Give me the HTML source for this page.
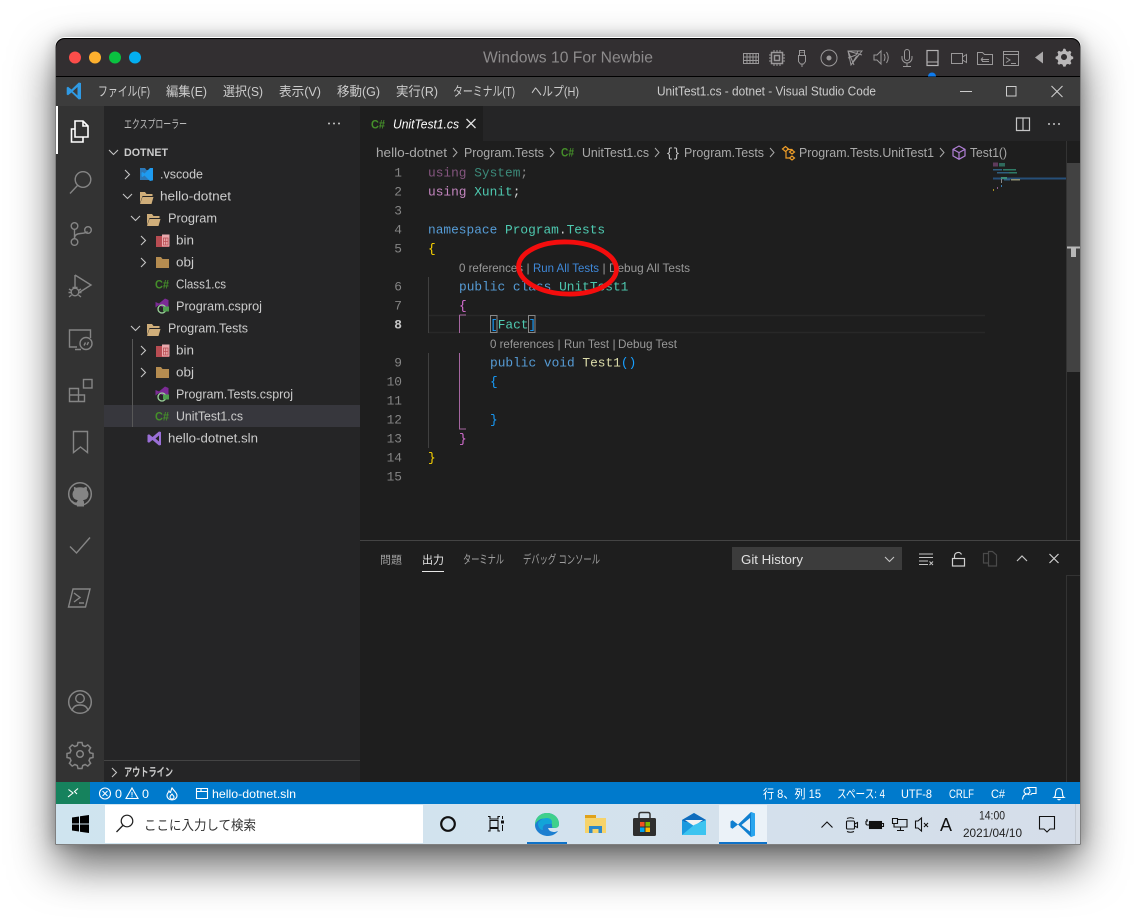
<!DOCTYPE html>
<html lang="ja"><head><meta charset="utf-8"><title>Windows 10 For Newbie</title>
<style>
html,body{margin:0;padding:0;background:#fff;width:1136px;height:918px;overflow:hidden}
#w{position:absolute;left:55px;top:37px;width:1026px;height:808px;border-radius:10px 10px 2px 2px;box-shadow:0 20px 44px rgba(0,0,0,.62),0 0 14px rgba(0,0,0,.22)}
svg{position:absolute;left:0;top:0}
text{font-family:"Liberation Sans","Noto Sans CJK JP",sans-serif;font-size:12.5px;fill:#ccc;white-space:pre}
.t{font-size:13px;fill:#ccc}
.m{font-size:13px;fill:#ccc}
.c{font-family:"Liberation Mono",monospace;font-size:12.83px}
.n{font-family:"Liberation Mono",monospace;font-size:12.83px;fill:#858585;text-anchor:end}
.l{font-size:12px;fill:#999}
.b{font-size:12.5px;fill:#a9a9a9}
.s{font-size:12px;fill:#fff}
.cs{font-family:"Liberation Sans",sans-serif;font-size:11.5px;font-weight:bold;fill:#458f2a}
.i{fill:none;stroke:#858585;stroke-width:1.4}
.d{fill:none;stroke:#d0d0d0;stroke-width:1.2}
.tb{fill:none;stroke:#9a9899;stroke-width:1}
</style></head><body>
<div id="w"></div>
<svg width="1136" height="918" viewBox="0 0 1136 918" xmlns="http://www.w3.org/2000/svg">
<!-- window frame -->
<path d="M55.5 47a9 9 0 0 1 9-9H1071.500a9 9 0 0 1 9 9V844.500H55.500Z" fill="#000"/>
<path d="M56 48a9 9 0 0 1 9-9H1071a9 9 0 0 1 9 9V76H56Z" fill="#322f31"/>
<rect x="56" y="77" width="1024" height="29" fill="#3c3c3c"/>
<rect x="56" y="106" width="48" height="676" fill="#333"/>
<rect x="104" y="106" width="256" height="676" fill="#252526"/>
<rect x="360" y="106" width="720" height="676" fill="#1e1e1e"/>
<rect x="360" y="106" width="720" height="35" fill="#252526"/>
<rect x="360" y="106" width="123" height="35" fill="#1e1e1e"/>
<rect x="56" y="782" width="1024" height="22" fill="#007acc"/>
<rect x="56" y="782" width="34" height="22" fill="#16825d"/>
<defs><linearGradient id="tbg" x1="0" x2="1" y1="0" y2="0"><stop offset="0" stop-color="#cfe4ef"/><stop offset=".45" stop-color="#d3e3ee"/><stop offset="1" stop-color="#d5dde9"/></linearGradient></defs>
<rect x="56" y="804" width="1024" height="40" fill="url(#tbg)"/>

<!-- mac title bar -->
<circle cx="75" cy="57.500" r="6" fill="#fc4d4a"/><circle cx="95" cy="57.500" r="6" fill="#fdb02e"/><circle cx="115" cy="57.500" r="6" fill="#0ac240"/><circle cx="135" cy="57.500" r="6" fill="#03aef0"/>
<text x="483" y="62.500" textLength="170" lengthAdjust="spacingAndGlyphs" style="font-size:16px;fill:#8d8b8c">Windows 10 For Newbie</text>
<g class="tb">
<path d="M743.500 53.500h15v10h-15zM743.500 57h15M743.500 60.500h15M747 53.500v10M750 53.500v10M753 53.500v10M756 53.500v10"/>
<path d="M771.500 52.500h11v11h-11zM774.500 55.500h5v5h-5z" stroke-width="1.500"/><path d="M769 55h2.500M769 58h2.500M769 61h2.500M782.500 55h2.500M782.500 58h2.500M782.500 61h2.500M774 50v2.500M777 50v2.500M780 50v2.500M774 63.500v2.500M777 63.500v2.500M780 63.500v2.500"/>
<path d="M799.500 50.500h5v5h-5zM798.500 55.500h7v6l-2 2.500h-3l-2-2.500zM802 64v3M801 52v1M803 52v1"/>
<circle cx="829" cy="58" r="8"/><circle cx="829" cy="58" r="2" fill="#9a9899"/>
<path d="M848 51h14l-11 14zM848 51l6 14M848 51l14 4M848 58l8-3 2-4M851 65l5-8 3-2"/>
<path d="M874 55h3l4-4v13l-4-4h-3zM884 54q2 3.500 0 7M886.500 52q3.500 5.500 0 11"/>
<rect x="904.500" y="49.500" width="5" height="11" rx="2.500"/><path d="M902 56v2a5 5 0 0 0 10 0v-2M907 63v3M903 66.500h8"/>
<rect x="927" y="50.500" width="11" height="15" fill="none" stroke="#b5b3b4" stroke-width="1.200"/><path d="M927 62h11" stroke="#b5b3b4"/>
<path d="M951.500 53.500h11v10h-11zM962.500 57l4-2.500v8l-4-2.500z"/>
<path d="M977.500 54.500v10h15v-10h-8l-2-2h-5zM981 59.500h8M981 59.500l2-2M981 59.500l2 2M989 61.500h-7"/>
<path d="M1003.500 51.500h15v14h-15zM1003.500 54.500h15M1006 57.500l4 2.500-4 2.500M1011 63.500h5"/>
</g>
<path d="M1043 51.500v12l-8-6z" fill="#aaa8a9"/>
<path d="M1064 49.500l1.500.5.700 2 1.700.700 2-.9 1.500 1.500-.9 2 .700 1.700 2 .7v2.200l-2 .7-.7 1.700.9 2-1.500 1.500-2-.9-1.700.7-.7 2h-2.200l-.7-2-1.700-.7-2 .9-1.500-1.500.9-2-.7-1.700-2-.7v-2.200l2-.7.7-1.700-.9-2 1.500-1.500 2 .9 1.700-.7.7-2zM1064 55a3 3 0 1 0 .01 0Z" transform="translate(0 -1)" fill="#b9b7b8" fill-rule="evenodd"/>
<path d="M928 76.500a4 4 0 0 1 8 0Z" fill="#0f7cf0"/>

<!-- menu bar -->
<path d="M78 83.500L75.800 83 68.500 90 65 87.200 63.700 88v7l1.300.8 3.500-2.800 7.300 7 2.200-.5ZM74.500 87.500V96L69.800 91.800Z" fill="#2f9ae4" fill-rule="evenodd" transform="translate(3 -.5)"/>
<text class="m" x="98" y="96" textLength="52" lengthAdjust="spacingAndGlyphs">ファイル(F)</text>
<text class="m" x="166" y="96" textLength="41" lengthAdjust="spacingAndGlyphs">編集(E)</text>
<text class="m" x="223" y="96" textLength="40" lengthAdjust="spacingAndGlyphs">選択(S)</text>
<text class="m" x="279" y="96" textLength="42" lengthAdjust="spacingAndGlyphs">表示(V)</text>
<text class="m" x="337" y="96" textLength="43" lengthAdjust="spacingAndGlyphs">移動(G)</text>
<text class="m" x="396" y="96" textLength="42" lengthAdjust="spacingAndGlyphs">実行(R)</text>
<text class="m" x="453" y="96" textLength="62" lengthAdjust="spacingAndGlyphs">ターミナル(T)</text>
<text class="m" x="531" y="96" textLength="48" lengthAdjust="spacingAndGlyphs">ヘルプ(H)</text>
<text x="657" y="95.500" textLength="219" lengthAdjust="spacingAndGlyphs" style="font-size:12.500px">UnitTest1.cs - dotnet - Visual Studio Code</text>
<path d="M960 91.500h12" stroke="#ccc" fill="none"/><rect x="1006.500" y="86.500" width="9.500" height="9.500" fill="none" stroke="#ccc"/><path d="M1051.500 86l11 11M1062.500 86l-11 11" stroke="#ccc" stroke-width="1.100" fill="none"/>

<!-- activity bar -->
<rect x="56" y="106" width="2" height="48" fill="#fff"/>
<path d="M75 129h-3.500v13h11.500v-5M75 121h8l5 5v11H75ZM83 121v5h5" fill="none" stroke="#fff" stroke-width="1.600"/>
<g class="i">
<circle cx="83" cy="179.500" r="7.800"/><path d="M77.500 185.500L70 193.500"/>
<circle cx="74.500" cy="226" r="3.300"/><circle cx="74.500" cy="242" r="3.300"/><circle cx="88" cy="230" r="3.300"/><path d="M74.500 229.500v9M74.500 238q0-4 6-4.500 6-.5 7-2"/>
<path d="M75 275v12M75 275l16 10-11 7"/><circle cx="75" cy="292" r="3.800"/><path d="M69 289l2.500 1.500M81 289l-2.500 1.500M68.500 292.500h2.500M81.500 292.500h-2.500M69 297l2.500-2M81 297l-2.500-2M72.500 287.500h5"/>
<path d="M77 347H69.500v-17h21v8M75 349.500h6"/><circle cx="86" cy="343.500" r="6"/><path d="M84 345.500l1.500-3M87 345l1.500-3"/>
<path d="M69.500 388.500h9v13h-9zM69.500 395h15v6.500h-6.200M78.500 388.500v6.500"/><rect x="83.500" y="379.500" width="8.500" height="8.500"/>
<path d="M73.500 431.500h14v21l-7-5.500-7 5.500z"/>
<circle cx="80" cy="494" r="11.300" stroke-width="1.500"/>
<path d="M70 546.500l6.500 6.500L90 537.500"/>
<path d="M73 589h17l-4.500 18H68.500zM74 593l6 4.500-6 4.500M79 603h5"/>
<circle cx="80" cy="702" r="11.300" stroke-width="1.500"/><circle cx="80" cy="698.500" r="4.300"/><path d="M72 711q1-6 8-6t8 6"/>
</g>
<path d="M73.500 486.500l2.800 1.200q3.700-1 7.400 0l2.800-1.200q.8 2 .3 3.600 1.700 1.800 1.700 4.200 0 5-5.500 6 1 .8 1 2.400v3.800h-7v-2q-3.500.6-4.500-2-.6-1.500-1.800-2.200 1.500-.3 2.500 1 1.200 1.600 3.800 1 0-1.400.9-2-5.400-1-5.400-6 0-2.400 1.700-4.200-.5-1.600-.2-3.600z" fill="#858585"/>
<g transform="translate(80 754)"><path d="M-2-11.500h4l.7 3 2.400 1 2.700-1.600 2.800 2.800-1.600 2.700 1 2.400 3 .7v4l-3 .7-1 2.400 1.600 2.700-2.800 2.800-2.700-1.600-2.400 1-.7 3h-4l-.7-3-2.400-1-2.700 1.600-2.800-2.800 1.600-2.700-1-2.400-3-.7v-4l3-.7 1-2.400-1.600-2.700 2.800-2.800 2.700 1.600 2.400-1z" fill="none" stroke="#858585" stroke-width="1.500"/><circle r="3.300" fill="none" stroke="#858585" stroke-width="1.500"/></g>

<!-- sidebar -->
<text x="124" y="128" textLength="63" lengthAdjust="spacingAndGlyphs" style="font-size:11.500px;fill:#bbb">エクスプローラー</text>
<g fill="#c5c5c5"><circle cx="329" cy="123.500" r="1"/><circle cx="334" cy="123.500" r="1"/><circle cx="339" cy="123.500" r="1"/></g>
<rect x="104" y="405" width="256" height="22" fill="#37373d"/>
<path d="M132.500 339v88" stroke="#585858"/>
<g fill="none" stroke="#c5c5c5" stroke-width="1.100">
<path d="M109 150l4.500 4.500 4.500-4.500"/>
<path d="M125 170l4.500 4.500-4.500 4.500"/>
<path d="M123 194l4.500 4.500 4.500-4.500"/>
<path d="M131 216l4.500 4.500 4.500-4.500"/>
<path d="M141 236l4.500 4.500-4.500 4.500"/><path d="M141 258l4.500 4.500-4.500 4.500"/>
<path d="M131 326l4.500 4.500 4.500-4.500"/>
<path d="M141 346l4.500 4.500-4.500 4.500"/><path d="M141 368l4.500 4.500-4.500 4.500"/>
</g>
<text x="124" y="156" textLength="44" lengthAdjust="spacingAndGlyphs" style="font-size:11px;font-weight:bold;fill:#ccc">DOTNET</text>
<text class="t" x="160" y="178.500" textLength="43" lengthAdjust="spacingAndGlyphs">.vscode</text>
<text class="t" x="160" y="200.500" textLength="71" lengthAdjust="spacingAndGlyphs">hello-dotnet</text>
<text class="t" x="168" y="222.500" textLength="49" lengthAdjust="spacingAndGlyphs">Program</text>
<text class="t" x="176" y="244.500" textLength="18" lengthAdjust="spacingAndGlyphs">bin</text>
<text class="t" x="176" y="266.500" textLength="18" lengthAdjust="spacingAndGlyphs">obj</text>
<text class="t" x="176" y="288.500" textLength="50" lengthAdjust="spacingAndGlyphs">Class1.cs</text>
<text class="t" x="176" y="310.500" textLength="86" lengthAdjust="spacingAndGlyphs">Program.csproj</text>
<text class="t" x="168" y="332.500" textLength="80" lengthAdjust="spacingAndGlyphs">Program.Tests</text>
<text class="t" x="176" y="354.500" textLength="18" lengthAdjust="spacingAndGlyphs">bin</text>
<text class="t" x="176" y="376.500" textLength="18" lengthAdjust="spacingAndGlyphs">obj</text>
<text class="t" x="176" y="398.500" textLength="117" lengthAdjust="spacingAndGlyphs">Program.Tests.csproj</text>
<text class="t" x="176" y="420.500" textLength="67" lengthAdjust="spacingAndGlyphs">UnitTest1.cs</text>
<text class="t" x="168" y="442.500" textLength="90" lengthAdjust="spacingAndGlyphs">hello-dotnet.sln</text>
<!-- file icons -->
<path d="M140 168h5l1.500 2h6.500v10h-13z" fill="#2b78b8"/><path d="M153 168l-3 0-5.500 5.500-2-1.500-1 .6v3.800l1 .6 2-1.500 5.500 5.500 3-.6z" fill="#1e9bf0"/>
<path d="M140 192h5l1.500 2h6v2h-10l-2.500 7zM142.500 197h11l-2 7h-11.500z" fill="#cfae7a"/>
<path d="M147 214h5l1.500 2h6v2h-10l-2.500 7zM149.500 219h11l-2 7h-11.500z" fill="#cfae7a"/>
<path d="M147 324h5l1.500 2h6v2h-10l-2.500 7zM149.500 329h11l-2 7h-11.500z" fill="#cfae7a"/>
<path d="M156 236h13v11h-13z" fill="#b84c52"/><path d="M162 234.500h7.500v12h-7.500z" fill="#e9a8ac"/><path d="M163.500 238h4.500v7h-4.500zM165.700 238v7M163.500 241.500h4.500" stroke="#b84c52" stroke-width=".8" fill="none"/>
<path d="M156 346h13v11h-13z" fill="#b84c52"/><path d="M162 344.500h7.500v12h-7.500z" fill="#e9a8ac"/><path d="M163.500 348h4.500v7h-4.500zM165.700 348v7M163.500 351.500h4.500" stroke="#b84c52" stroke-width=".8" fill="none"/>
<path d="M156 257h5l1.500 2h6.500v9h-13z" fill="#b58c50"/><path d="M156 367h5l1.500 2h6.500v9h-13z" fill="#b58c50"/>
<text class="cs" x="155" y="288.500" textLength="14" lengthAdjust="spacingAndGlyphs">C#</text>
<text class="cs" x="155" y="420.500" textLength="14" lengthAdjust="spacingAndGlyphs">C#</text>
<g id="p"><path d="M155.500 302l3.500 1.500 6-5 3.500 1.500v8l-4.500 0-5-3-3.500 2.500z" fill="#7b2b95"/><circle cx="162" cy="309" r="4" fill="none" stroke="#9bd49a" stroke-width="1.300"/><rect x="163" y="306.500" width="6" height="5" fill="#4f9e4f"/></g>
<g transform="translate(0 88)"><path d="M155.500 302l3.500 1.500 6-5 3.500 1.500v8l-4.500 0-5-3-3.500 2.500z" fill="#7b2b95"/><circle cx="162" cy="309" r="4" fill="none" stroke="#9bd49a" stroke-width="1.300"/><rect x="163" y="306.500" width="6" height="5" fill="#4f9e4f"/></g>
<path d="M159 431.500l2 .5v13l-2 .5-6.500-5.500-3.500 2.800-1.500-.8v-7l1.500-.8 3.500 2.800zM159 435.500l-3.500 3 3.500 3z" fill="#9a6fd6" fill-rule="evenodd"/>
<path d="M104 760.500h256" stroke="#444"/>
<path d="M112 768l4.500 4.500-4.500 4.500" fill="none" stroke="#c5c5c5" stroke-width="1.100"/>
<text x="124" y="776" textLength="49" lengthAdjust="spacingAndGlyphs" style="font-size:11.500px;font-weight:bold;fill:#ccc">アウトライン</text>

<!-- tab -->
<text class="cs" x="371" y="128.500" textLength="14" lengthAdjust="spacingAndGlyphs">C#</text>
<text x="393" y="128.500" textLength="66" lengthAdjust="spacingAndGlyphs" style="font-size:13px;font-style:italic;fill:#fff">UnitTest1.cs</text>
<path d="M466.500 119l9 9M475.500 119l-9 9" stroke="#e0e0e0" stroke-width="1.300" fill="none"/>
<path d="M1016.500 118h13v12.500h-13zM1023 118v12.500" fill="none" stroke="#c5c5c5" stroke-width="1.200"/>
<g fill="#c5c5c5"><circle cx="1049" cy="124" r="1"/><circle cx="1054" cy="124" r="1"/><circle cx="1059" cy="124" r="1"/></g>

<!-- breadcrumb -->
<text class="b" x="376" y="157" textLength="71" lengthAdjust="spacingAndGlyphs">hello-dotnet</text>
<path d="M453 148l4 4.500-4 4.500M550 148l4 4.500-4 4.500M655 148l4 4.500-4 4.500M770 148l4 4.500-4 4.500M940 148l4 4.500-4 4.500" fill="none" stroke="#a9a9a9"/>
<text class="b" x="464" y="157" textLength="80" lengthAdjust="spacingAndGlyphs">Program.Tests</text>
<text class="cs" x="561" y="156.500" textLength="13" lengthAdjust="spacingAndGlyphs">C#</text>
<text class="b" x="582" y="157" textLength="67" lengthAdjust="spacingAndGlyphs">UnitTest1.cs</text>
<text x="666" y="157" textLength="14" lengthAdjust="spacingAndGlyphs" style="font-size:13px;fill:#d4d4d4;font-family:'Liberation Mono',monospace">{}</text>
<text class="b" x="684" y="157" textLength="80" lengthAdjust="spacingAndGlyphs">Program.Tests</text>
<path d="M782.500 149l3-2.500 3 2.500-3 2.500zM789.500 152l2.500-2 2.500 2-2.500 2zM789.500 158l2.500-2 2.500 2-2.500 2zM786 151.500v6.500h3.500M787 149.500h5l.5 .5" fill="none" stroke="#ee9d28" stroke-width="1.200"/>
<text class="b" x="799" y="157" textLength="135" lengthAdjust="spacingAndGlyphs">Program.Tests.UnitTest1</text>
<path d="M959 146l6 3.300v6.600l-6 3.400-6-3.400v-6.600zM953 149.300l6 3.300 6-3.300M959 152.600v6.700" fill="none" stroke="#b180d7" stroke-width="1.200"/>
<text class="b" x="970" y="157" textLength="37" lengthAdjust="spacingAndGlyphs">Test1()</text>

<!-- line numbers -->
<text class="n" x="402" y="176.500">1</text><text class="n" x="402" y="195.500">2</text><text class="n" x="402" y="214.500">3</text><text class="n" x="402" y="233.500">4</text><text class="n" x="402" y="252.500">5</text><text class="n" x="402" y="290.500">6</text><text class="n" x="402" y="309.500">7</text><text class="n" x="402" y="328.500" style="fill:#c6c6c6;font-weight:bold">8</text><text class="n" x="402" y="366.500">9</text><text class="n" x="402" y="385.500">10</text><text class="n" x="402" y="404.500">11</text><text class="n" x="402" y="423.500">12</text><text class="n" x="402" y="442.500">13</text><text class="n" x="402" y="461.500">14</text><text class="n" x="402" y="480.500">15</text>

<!-- guides -->
<path d="M428 315.500H985M428 332.500H985" stroke="#282828" stroke-width="1.500"/>
<path d="M428.500 277v56M428.500 353v95" stroke="#404040"/>
<path d="M459.500 315v18M459.500 353v76H466M459.500 315H466" fill="none" stroke="#a566a0"/>
<rect x="490.500" y="315.500" width="6.500" height="17" fill="none" stroke="#888"/><rect x="528.500" y="315.500" width="6.500" height="17" fill="none" stroke="#888"/>

<!-- code -->
<text class="c" x="428" y="176.500"><tspan fill="#85557f">using</tspan><tspan fill="#3c8a7a"> System</tspan><tspan fill="#8a8a8a">;</tspan></text>
<text class="c" x="428" y="195.500"><tspan fill="#c586c0">using</tspan><tspan fill="#4ec9b0"> Xunit</tspan><tspan fill="#d4d4d4">;</tspan></text>
<text class="c" x="428" y="233.500"><tspan fill="#569cd6">namespace</tspan><tspan fill="#4ec9b0"> Program</tspan><tspan fill="#d4d4d4">.</tspan><tspan fill="#4ec9b0">Tests</tspan></text>
<text class="c" x="428" y="252.500" style="fill:#ffd700">{</text>
<text class="c" x="459" y="290.500"><tspan fill="#569cd6">public class</tspan><tspan fill="#4ec9b0"> UnitTest1</tspan></text>
<text class="c" x="459" y="309.500" style="fill:#da70d6">{</text>
<text class="c" x="490" y="328.500"><tspan fill="#179fff">[</tspan><tspan fill="#4ec9b0">Fact</tspan><tspan fill="#179fff">]</tspan></text>
<text class="c" x="490" y="366.500"><tspan fill="#569cd6">public void</tspan><tspan fill="#dcdcaa"> Test1</tspan><tspan fill="#179fff">()</tspan></text>
<text class="c" x="490" y="385.500" style="fill:#179fff">{</text>
<text class="c" x="490" y="423.500" style="fill:#179fff">}</text>
<text class="c" x="459" y="442.500" style="fill:#da70d6">}</text>
<text class="c" x="428" y="461.500" style="fill:#ffd700">}</text>

<!-- code lens -->
<text class="l" x="459" y="272" textLength="64" lengthAdjust="spacingAndGlyphs">0 references</text><text class="l" x="526.500" y="272">|</text>
<text class="l" x="533" y="272" textLength="66" lengthAdjust="spacingAndGlyphs" style="fill:#3f88d8">Run All Tests</text><text class="l" x="602.500" y="272">|</text>
<text class="l" x="609" y="272" textLength="81" lengthAdjust="spacingAndGlyphs">Debug All Tests</text>
<text class="l" x="490" y="348" textLength="64" lengthAdjust="spacingAndGlyphs">0 references</text><text class="l" x="557.500" y="348">|</text>
<text class="l" x="564" y="348" textLength="45" lengthAdjust="spacingAndGlyphs">Run Test</text><text class="l" x="612.500" y="348">|</text>
<text class="l" x="618" y="348" textLength="59" lengthAdjust="spacingAndGlyphs">Debug Test</text>
<ellipse cx="567.500" cy="268" rx="49" ry="26" fill="none" stroke="#f40d0d" stroke-width="4.800" transform="rotate(2 567.500 268)"/>

<!-- minimap / scrollbar -->
<rect x="993" y="162.500" width="5" height="4" fill="#5e3b5c"/><rect x="999" y="163" width="6" height="3.500" fill="#2f6a5c"/>
<rect x="993" y="169" width="9" height="1.500" fill="#2f5f80"/><rect x="1003" y="169" width="13" height="1.500" fill="#2f7a66"/>
<rect x="997" y="172" width="12" height="1.500" fill="#2f5f80"/><rect x="1009" y="172" width="8" height="1.500" fill="#2f7a66"/>
<rect x="993" y="177.500" width="73" height="2" fill="#264f78"/><rect x="1001" y="177" width="6" height="2" fill="#3c8a7a"/>
<rect x="1001" y="179" width="1" height="4" fill="#888"/><rect x="1004" y="179" width="6" height="1.500" fill="#2f5f80"/><rect x="1011" y="179" width="9" height="1.500" fill="#8f8f70"/>
<rect x="1001" y="185" width="1" height="2" fill="#3a7db0"/><rect x="997" y="187" width="1" height="2" fill="#8d5f8a"/><rect x="993" y="189" width="1" height="2" fill="#a89020"/>
<path d="M1066.500 141v399" stroke="#333"/>
<rect x="1067" y="163" width="13" height="209" fill="#424242"/>
<rect x="1067" y="246.500" width="13" height="2" fill="#b8b8b8"/><rect x="1071" y="248" width="5" height="9" fill="#b8b8b8"/>

<!-- panel -->
<path d="M360 540.500h720" stroke="#444"/>
<text x="380" y="563.500" textLength="22" lengthAdjust="spacingAndGlyphs" style="font-size:11px;fill:#a0a0a0">問題</text>
<text x="422" y="563.500" textLength="22" lengthAdjust="spacingAndGlyphs" style="font-size:11px;fill:#e7e7e7">出力</text>
<rect x="422" y="571" width="22" height="1" fill="#e7e7e7"/>
<text x="463" y="563.500" textLength="41" lengthAdjust="spacingAndGlyphs" style="font-size:12px;fill:#a0a0a0">ターミナル</text>
<text x="523" y="563.500" textLength="77" lengthAdjust="spacingAndGlyphs" style="font-size:12px;fill:#a0a0a0">デバッグ コンソール</text>
<rect x="732" y="547" width="170" height="23" fill="#3c3c3c"/>
<text x="741" y="564" textLength="62" lengthAdjust="spacingAndGlyphs" style="font-size:13px;fill:#e0e0e0">Git History</text>
<path d="M885 557l4.500 4.500 4.500-4.500" fill="none" stroke="#c5c5c5" stroke-width="1.100"/>
<path d="M919 554h14M919 557.500h14M919 561h9M919 564.500h9" stroke="#c5c5c5" fill="none"/><path d="M929.500 561.500l3.500 3.500M933 561.500l-3.500 3.500" stroke="#c5c5c5" fill="none"/>
<rect x="952.500" y="558.500" width="12" height="7.500" fill="none" stroke="#d0d0d0" stroke-width="1.200"/><path d="M954.500 558.500v-2.500a3.700 3.700 0 0 1 7-1.500" fill="none" stroke="#d0d0d0" stroke-width="1.200"/>
<path d="M983.500 553.500h5v-2h4l4 3.500v11h-8v-3h-5zM988.500 553.500v9" fill="none" stroke="#4a4a4a" stroke-width="1.200"/>
<path d="M1017 561l5-5 5 5" fill="none" stroke="#c5c5c5" stroke-width="1.200"/>
<path d="M1049.500 554l9 9M1058.500 554l-9 9" fill="none" stroke="#d0d0d0" stroke-width="1.200"/>
<path d="M1066.500 575.500H1080M1066.500 575v207" fill="none" stroke="#333"/>

<!-- status bar -->
<path d="M68 797l5-4-4.500-3.500M78 788.500l-3.500 3 2.500 2.500" fill="none" stroke="#fff" stroke-width="1.100"/>
<circle cx="105" cy="793.500" r="5.500" fill="none" stroke="#fff" stroke-width="1.100"/><path d="M102.500 791l5 5M107.500 791l-5 5" stroke="#fff" fill="none"/>
<text class="s" x="115" y="798" textLength="7" lengthAdjust="spacingAndGlyphs">0</text>
<path d="M132 788l6 10.500h-12z" fill="none" stroke="#fff" stroke-width="1.100"/><path d="M132 792v3.500M132 796.300v1" stroke="#fff" fill="none"/>
<text class="s" x="142" y="798" textLength="7" lengthAdjust="spacingAndGlyphs">0</text>
<path d="M172 787.500c.5 2.500 5 4.500 5 8a5 4.500 0 0 1-10 0c0-2 1.500-3 2-4.500.5 1 1 1.500 1.500 1.500.5-2 1-3 1.500-5zM172 794c1 1.500 2 2 2 3a2 2 0 0 1-4 0c0-1 1-2 2-3z" fill="none" stroke="#fff" stroke-width="1.100"/>
<path d="M196.500 788.500h11v10h-11zM196.500 791.500h11M201 788.500v3" fill="none" stroke="#fff" stroke-width="1.100"/>
<text class="s" x="212" y="798" textLength="84" lengthAdjust="spacingAndGlyphs">hello-dotnet.sln</text>
<text class="s" x="763" y="798" textLength="58" lengthAdjust="spacingAndGlyphs">行 8、列 15</text>
<text class="s" x="837" y="798" textLength="48" lengthAdjust="spacingAndGlyphs">スペース: 4</text>
<text class="s" x="901" y="798" textLength="31" lengthAdjust="spacingAndGlyphs">UTF-8</text>
<text class="s" x="949" y="798" textLength="25" lengthAdjust="spacingAndGlyphs">CRLF</text>
<text class="s" x="991" y="798" textLength="14" lengthAdjust="spacingAndGlyphs">C#</text>
<circle cx="1027" cy="791" r="3" fill="none" stroke="#fff" stroke-width="1.100"/><path d="M1022.500 799.500q.5-5 4.500-5.500 1.500.2 2.500 1M1027 787.500h9v6h-4l-1.500 1.500" fill="none" stroke="#fff" stroke-width="1.100"/>
<path d="M1054 797.500q1.500-1 1.500-4 0-5 3.500-5t3.500 5q0 3 1.500 4zM1057.500 799q1.500 1.500 3 0" fill="none" stroke="#fff" stroke-width="1.100"/>

<!-- taskbar -->
<path d="M72 817.500l7-1v7h-7zM80 816.300l9-1.300v8.500h-9zM72 824.500h7v7l-7-1zM80 824.500h9v8.500l-9-1.300z" fill="#000"/>
<rect x="105" y="805" width="318" height="38" fill="#fff"/>
<circle cx="127" cy="821" r="5.800" fill="none" stroke="#222" stroke-width="1.200"/><path d="M122.800 825.500L116.500 832" stroke="#222" stroke-width="1.300" fill="none"/>
<text x="144" y="830" textLength="112" lengthAdjust="spacingAndGlyphs" style="font-size:13.500px;fill:#333">ここに入力して検索</text>
<circle cx="448" cy="824" r="6.800" fill="none" stroke="#111" stroke-width="2.200"/>
<path d="M488 816.500h2v2.500h8v-2.500h2M488 831h2v-2.500h8v2.500h2M490 820.500h8v7h-8z" fill="none" stroke="#111" stroke-width="1.100"/><rect x="501" y="820.500" width="3" height="3" fill="#111"/><path d="M502.500 816v3M502.500 825v6" stroke="#111"/>
<path d="M535 825c0-7 5-12 12-12 6 0 12 4 12 11 0 3-2 4-5 4h-6c1 3 3 4 7 4l3-1c-2 3-6 5-10 5-7 0-13-5-13-11z" fill="#1d7fd0"/>
<path d="M547 813c6 0 12 4 12 11 0 3-2 4-4 4l-3-.5c1-5-3-9-8-9-4 0-8 3-9 6.500 0-7 5-12 12-12z" fill="#3fd08c"/><path d="M538 823c2-3 5-5 9-5 3 0 5 2 5 4 0 1-1 2-2 2h-3c-3 0-5 3-4 6-3 0-5-3-5-7z" fill="#12a4d8"/>
<path d="M585 816h10l0 2h11v15h-21z" fill="#f6d36b"/><path d="M585 815h11v3h-11z" fill="#e0a21b"/><path d="M589 826h13v7h-3.500v-4h-6v4H589z" fill="#2d88c9"/>
<rect x="633" y="818" width="23" height="18" rx="1.500" fill="#2f2f2f"/><path d="M639 818v-3.500q0-2 2-2h7q2 0 2 2v3.500" fill="none" stroke="#333" stroke-width="1.500"/><rect x="640" y="822" width="4.500" height="4.500" fill="#f25022"/><rect x="645.500" y="822" width="4.500" height="4.500" fill="#7fba00"/><rect x="640" y="827.500" width="4.500" height="4.500" fill="#00a4ef"/><rect x="645.500" y="827.500" width="4.500" height="4.500" fill="#ffb900"/>
<path d="M682 820l12-7 12 7v15h-24z" fill="#1a9adf"/><path d="M682 820l12-7 12 7-3 2H685z" fill="#0f6cbd"/><path d="M685 820h18l-9 6z" fill="#f2f2f2"/><path d="M682 835l12-10 12-5v15z" fill="#3cc4f0"/>
<rect x="719" y="805" width="48" height="39" fill="#ebf2f8"/>
<path d="M751 812l-13 12.500-5.500-4.200-2 1.200v6l2 1.200 5.500-4.200L751 837l4-1.500V813.500ZM750 818v13.500L741.500 825Z" fill="#0f7fd0" fill-rule="evenodd"/><path d="M751 812l4 1.500v22l-4 1.500Z" fill="#29a5ee"/>
<rect x="527" y="842" width="40" height="2" fill="#0f72c8"/><rect x="719" y="842" width="48" height="2" fill="#0f72c8"/>
<g fill="none" stroke="#111" stroke-width="1.100">
<path d="M821.500 827.500l5.500-5.500 5.500 5.500"/>
<rect x="846.500" y="821" width="8" height="8" rx="1"/><path d="M854.500 824l3-1.500v5l-3-1.500M847 818.500q3.500-1.500 7 0M847 831.500q3.500 1.500 7 0"/>
<rect x="869.500" y="821.500" width="12" height="7"/><path d="M882 823.500h1.500v3H882M869 825h-2l-1-1v-3M866 821h2M867 819v2"/><rect x="870.500" y="822.500" width="10" height="5" fill="#111"/>
<path d="M892.500 818.500h5v5h-5zM897.500 819.500h9.500v7.500h-13v-3M900.500 827v3M897 830.500h7"/>
<path d="M915.500 821h2.500l3.500-3v13l-3.500-3h-2.500zM924 823l4 4M928 823l-4 4"/>
</g>
<text x="940" y="831" textLength="12" lengthAdjust="spacingAndGlyphs" style="font-size:18px;fill:#111">A</text>
<text x="979" y="819.500" textLength="26" lengthAdjust="spacingAndGlyphs" style="font-size:12px;fill:#222">14:00</text>
<text x="963" y="837" textLength="59" lengthAdjust="spacingAndGlyphs" style="font-size:12px;fill:#222">2021/04/10</text>
<path d="M1039.500 816.500h15v12.500h-4.500l-3 3-3-3h-4.500z" fill="none" stroke="#111" stroke-width="1.100"/>
<rect x="1075" y="804" width="5" height="40" fill="#d7dde6"/><path d="M1075.500 804v40" stroke="#c3c9d2"/>
</svg>
</body></html>
